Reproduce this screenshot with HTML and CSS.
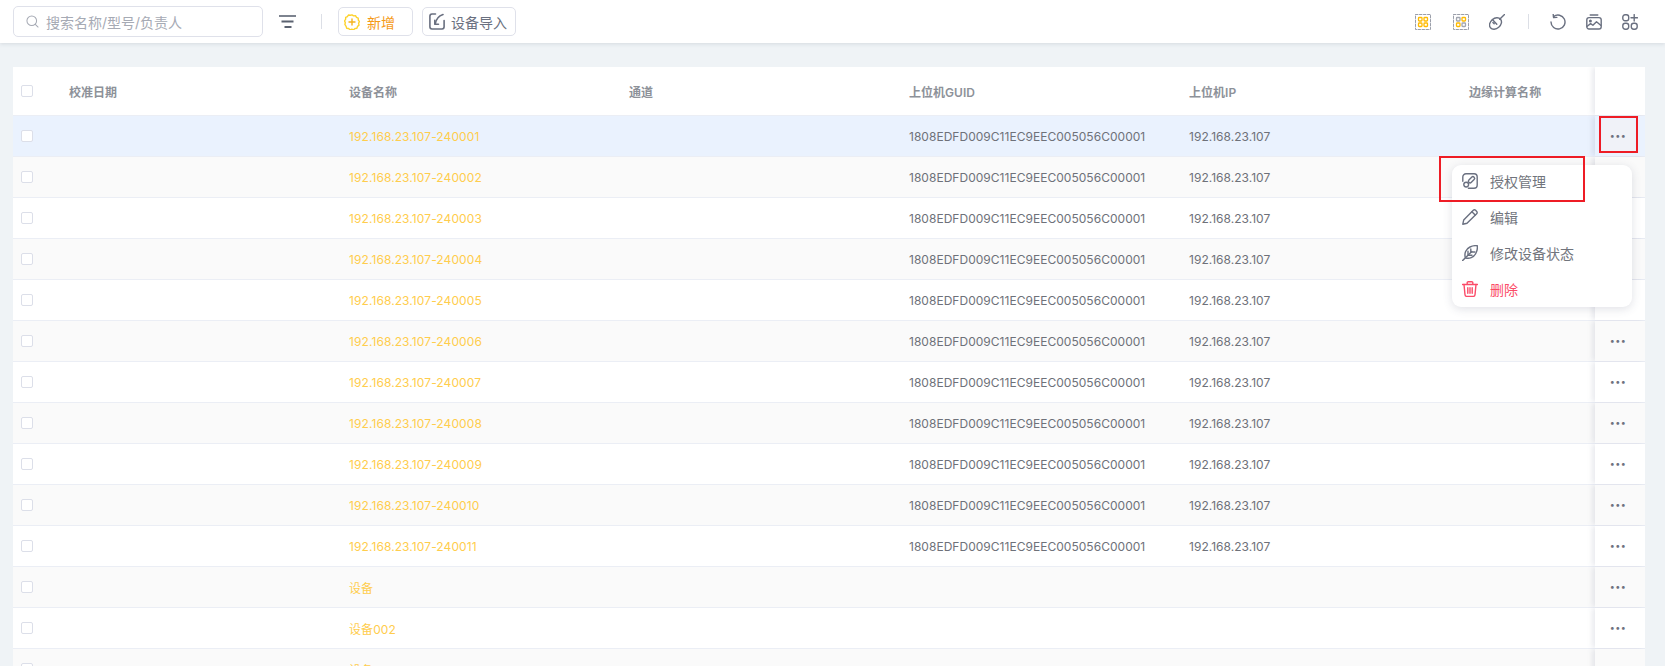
FILE: index.html
```html
<!DOCTYPE html>
<html lang="zh-CN">
<head>
<meta charset="utf-8">
<title>设备管理</title>
<link rel="stylesheet" href="styles.css">
</head>
<body>
<header class="toolbar">
  <label class="search">
    <svg class="ico-search" viewBox="0 0 14 14"><circle cx="6.2" cy="6.2" r="5.2"/><path d="M10 10l3 3"/></svg>
    <span class="search-text">搜索名称/型号/负责人</span>
  </label>
  <svg class="ico-filter" viewBox="0 0 17 13"><path class="thin" d="M0 1h17"/><path d="M2.500 6.500h12M5.500 12h7"/></svg>
  <span class="divider first"></span>
  <button class="btn btn-add">
    <svg class="ico16 gold" viewBox="0 0 16 16"><path d="M8 .9l1.600 1 1.900-.2 1 1.600 1.700.8.100 1.900 1.100 1.600-.8 1.700.4 1.900-1.500 1.200-.6 1.800-1.900.3-1.400 1.300-1.800-.6-1.800.6-1.400-1.300-1.900-.3-.6-1.800L.9 10.500l.4-1.900L.500 6.900l1.100-1.600.1-1.900 1.700-.8 1-1.600 1.900.2z"/><path class="orange" d="M8 5v6M5 8h6"/></svg>
    <span>新增</span>
  </button>
  <button class="btn btn-import">
    <svg class="ico-import slate" viewBox="0 0 16 17"><path d="M6.500 1H3A2.200 2.200 0 0 0 .9 3.200v10.600A2.200 2.200 0 0 0 3 16h10a2.200 2.200 0 0 0 2.100-2.200V7.500"/><path d="M14 1.500C9.500 3 7 6 6.200 11"/><path d="M5.800 7.400v3.900h3.700"/></svg>
    <span>设备导入</span>
  </button>
  <div class="tools">
    <svg class="ico16" viewBox="0 0 16 16"><rect class="dash" x=".5" y=".5" width="15" height="15"/><g class="gold-s"><rect x="3.500" y="3.500" width="3.500" height="3.500" rx=".8"/><rect x="9" y="3.500" width="3.500" height="3.500" rx=".8"/><rect x="3.500" y="9" width="3.500" height="3.500" rx=".8"/><rect x="9" y="9" width="3.500" height="3.500" rx=".8"/></g></svg>
    <svg class="ico16" viewBox="0 0 16 16"><rect class="dash" x=".5" y=".5" width="15" height="15"/><g class="gray-s"><rect x="3.500" y="3.500" width="3.500" height="3.500" rx=".8"/><rect x="9" y="9" width="3.500" height="3.500" rx=".8"/></g><g class="gold-s"><rect x="9" y="3.500" width="3.500" height="3.500" rx=".8"/><rect x="3.500" y="9" width="3.500" height="3.500" rx=".8"/></g></svg>
    <svg class="ico16 slate" viewBox="0 0 16 16"><ellipse cx="6.500" cy="9.500" rx="6.600" ry="5" transform="rotate(-40 6.500 9.500)"/><path d="M3.400 5.600l4.400 4.600M5.200 9.800L3.900 8.400"/><path d="M10.700 5.300L15.500.6"/></svg>
    <span class="divider"></span>
    <svg class="ico16 slate" viewBox="0 0 16 16"><path d="M3.600 2.600A7 7 0 1 1 1 8"/><path d="M3.200 .4l.4 3.200 3.200-.2"/></svg>
    <svg class="ico16 slate" viewBox="0 0 16 16"><path d="M4.200 1h7.600"/><rect x=".8" y="3.600" width="14.400" height="11.400" rx="2.200"/><circle cx="4.400" cy="7" r=".8"/><path d="M1.200 12.200l3.400-2.600 2.300 1.700 3.600-3.600 4.200 3.600"/></svg>
    <svg class="ico16 slate" viewBox="0 0 16 16"><rect x=".8" y=".8" width="5.900" height="5.900" rx="2.200"/><rect x=".8" y="9.300" width="5.900" height="5.900" rx="2.400"/><rect x="9.300" y="9.300" width="5.900" height="5.900" rx="2.400"/><path d="M12.200 .6v6.400M9 3.800h6.400"/></svg>
  </div>
</header>

<main class="table">
  <div class="row head">
    <div class="cell"><i class="check"></i></div>
    <div class="cell">校准日期</div>
    <div class="cell">设备名称</div>
    <div class="cell">通道</div>
    <div class="cell">上位机GUID</div>
    <div class="cell">上位机IP</div>
    <div class="cell">边缘计算名称</div>
    <div class="cell act"></div>
  </div>
  <div class="row hover">
    <div class="cell"><i class="check"></i></div><div class="cell"></div>
    <div class="cell link">192.168.23.107-240001</div><div class="cell"></div>
    <div class="cell">1808EDFD009C11EC9EEC005056C00001</div><div class="cell">192.168.23.107</div><div class="cell"></div>
    <div class="cell act"><span class="more on">•••</span></div>
  </div>
  <div class="row">
    <div class="cell"><i class="check"></i></div><div class="cell"></div>
    <div class="cell link">192.168.23.107-240002</div><div class="cell"></div>
    <div class="cell">1808EDFD009C11EC9EEC005056C00001</div><div class="cell">192.168.23.107</div><div class="cell"></div>
    <div class="cell act"><span class="more">•••</span></div>
  </div>
  <div class="row">
    <div class="cell"><i class="check"></i></div><div class="cell"></div>
    <div class="cell link">192.168.23.107-240003</div><div class="cell"></div>
    <div class="cell">1808EDFD009C11EC9EEC005056C00001</div><div class="cell">192.168.23.107</div><div class="cell"></div>
    <div class="cell act"><span class="more">•••</span></div>
  </div>
  <div class="row">
    <div class="cell"><i class="check"></i></div><div class="cell"></div>
    <div class="cell link">192.168.23.107-240004</div><div class="cell"></div>
    <div class="cell">1808EDFD009C11EC9EEC005056C00001</div><div class="cell">192.168.23.107</div><div class="cell"></div>
    <div class="cell act"><span class="more">•••</span></div>
  </div>
  <div class="row">
    <div class="cell"><i class="check"></i></div><div class="cell"></div>
    <div class="cell link">192.168.23.107-240005</div><div class="cell"></div>
    <div class="cell">1808EDFD009C11EC9EEC005056C00001</div><div class="cell">192.168.23.107</div><div class="cell"></div>
    <div class="cell act"><span class="more">•••</span></div>
  </div>
  <div class="row">
    <div class="cell"><i class="check"></i></div><div class="cell"></div>
    <div class="cell link">192.168.23.107-240006</div><div class="cell"></div>
    <div class="cell">1808EDFD009C11EC9EEC005056C00001</div><div class="cell">192.168.23.107</div><div class="cell"></div>
    <div class="cell act"><span class="more">•••</span></div>
  </div>
  <div class="row">
    <div class="cell"><i class="check"></i></div><div class="cell"></div>
    <div class="cell link">192.168.23.107-240007</div><div class="cell"></div>
    <div class="cell">1808EDFD009C11EC9EEC005056C00001</div><div class="cell">192.168.23.107</div><div class="cell"></div>
    <div class="cell act"><span class="more">•••</span></div>
  </div>
  <div class="row">
    <div class="cell"><i class="check"></i></div><div class="cell"></div>
    <div class="cell link">192.168.23.107-240008</div><div class="cell"></div>
    <div class="cell">1808EDFD009C11EC9EEC005056C00001</div><div class="cell">192.168.23.107</div><div class="cell"></div>
    <div class="cell act"><span class="more">•••</span></div>
  </div>
  <div class="row">
    <div class="cell"><i class="check"></i></div><div class="cell"></div>
    <div class="cell link">192.168.23.107-240009</div><div class="cell"></div>
    <div class="cell">1808EDFD009C11EC9EEC005056C00001</div><div class="cell">192.168.23.107</div><div class="cell"></div>
    <div class="cell act"><span class="more">•••</span></div>
  </div>
  <div class="row">
    <div class="cell"><i class="check"></i></div><div class="cell"></div>
    <div class="cell link">192.168.23.107-240010</div><div class="cell"></div>
    <div class="cell">1808EDFD009C11EC9EEC005056C00001</div><div class="cell">192.168.23.107</div><div class="cell"></div>
    <div class="cell act"><span class="more">•••</span></div>
  </div>
  <div class="row">
    <div class="cell"><i class="check"></i></div><div class="cell"></div>
    <div class="cell link">192.168.23.107-240011</div><div class="cell"></div>
    <div class="cell">1808EDFD009C11EC9EEC005056C00001</div><div class="cell">192.168.23.107</div><div class="cell"></div>
    <div class="cell act"><span class="more">•••</span></div>
  </div>
  <div class="row">
    <div class="cell"><i class="check"></i></div><div class="cell"></div>
    <div class="cell link">设备</div><div class="cell"></div>
    <div class="cell"></div><div class="cell"></div><div class="cell"></div>
    <div class="cell act"><span class="more">•••</span></div>
  </div>
  <div class="row">
    <div class="cell"><i class="check"></i></div><div class="cell"></div>
    <div class="cell link">设备002</div><div class="cell"></div>
    <div class="cell"></div><div class="cell"></div><div class="cell"></div>
    <div class="cell act"><span class="more">•••</span></div>
  </div>
  <div class="row">
    <div class="cell"><i class="check"></i></div><div class="cell"></div>
    <div class="cell link">设备001</div><div class="cell"></div>
    <div class="cell"></div><div class="cell"></div><div class="cell"></div>
    <div class="cell act"><span class="more">•••</span></div>
  </div>
</main>

<ul class="menu">
  <li>
    <svg class="ico16 slate" viewBox="0 0 16 16"><path d="M.8 8.200V4A3.200 3.200 0 0 1 4 .8h8A3.200 3.200 0 0 1 15.200 4v8a3.200 3.200 0 0 1-3.200 3.200H6.400"/><circle cx="4.200" cy="11.600" r="2.400"/><rect x="5.800" y="5" width="7.400" height="3.500" rx="1.750" transform="rotate(-45 9.500 6.750)"/></svg>
    <span>授权管理</span>
  </li>
  <li>
    <svg class="ico16 slate" viewBox="0 0 16 16"><path d="M.8 15.200l.9-4.100L11.300 1.300a1.600 1.600 0 0 1 2.300 0l1.100 1.100a1.600 1.600 0 0 1 0 2.300L5 14.300z"/><path d="M9.900 2.800l3.300 3.300"/></svg>
    <span>编辑</span>
  </li>
  <li>
    <svg class="ico16 slate" viewBox="0 0 16 16"><path d="M.6 15.600L9.800 6.400"/><path d="M3.400 12.800C2 8.500 3.800 4 8 2c2.400-1.200 5.200-1.500 7.300-1.200.3 2.500-.2 5.200-1.400 7.400C11.700 12.600 7.200 14.200 3.400 12.800z"/><path d="M6 6.200v4h4M8.800 4v3.300M12.800 7H9.400"/></svg>
    <span>修改设备状态</span>
  </li>
  <li class="danger">
    <svg class="ico16 red" viewBox="0 0 16 16"><path d="M.5 3.500h15M5.200 3.400V1.600C5.200 1 5.600.7 6.200.7h3.600c.6 0 1 .3 1 .9v1.800"/><path d="M2 3.500l1 10.300c.1 1 .8 1.600 1.800 1.600h6.400c1 0 1.700-.6 1.800-1.600L14 3.500"/><path d="M5.800 6.800v5.400M8 6.800v5.400M10.200 6.800v5.400"/></svg>
    <span>删除</span>
  </li>
</ul>

<span class="mark mark-dots"></span>
<span class="mark mark-item"></span>
</body>
</html>
```

FILE: styles.css
```css
* { box-sizing: border-box; }

html, body {
  height: 100%;
  margin: 0;
  overflow: hidden;
}

body {
  background: #eff3f6;
  color: #6e7179;
  font-family: Inter, "Noto Sans CJK SC", sans-serif;
  font-size: 12px;
}

svg { display: block; flex: none; fill: none; }

.ico16 { width: 16px; height: 16px; stroke-width: 1.4; stroke-linecap: round; stroke-linejoin: round; }
.ico-import { width: 16px; height: 17px; stroke-width: 1.6; stroke-linecap: round; stroke-linejoin: round; }
.slate { stroke: #6a7080; }
.red { stroke: #fb4b68; }
.gold { stroke: #fdd22c; stroke-width: 1.4; }
.orange { stroke: #f5b21c; }
.dash { stroke: #9a9ea9; stroke-width: 1; stroke-dasharray: 2.500 1.500; }
.gold-s { stroke: #ffbb00; stroke-width: 1.300; }
.gray-s { stroke: #a2a6b0; stroke-width: 1.300; }

.toolbar {
  position: relative;
  z-index: 2;
  display: flex;
  align-items: center;
  height: 43px;
  padding: 0 27px 0 13px;
  background: #fff;
  box-shadow: 0 1px 4px rgba(60, 70, 90, .14);
}

.search {
  display: flex;
  flex: none;
  align-items: center;
  gap: 7px;
  width: 250px;
  height: 31px;
  padding-left: 12px;
  border: 1px solid #dfe1ea;
  border-radius: 5px;
}
.ico-search { width: 13px; height: 13px; stroke: #a6aab4; stroke-width: 1.100; stroke-linecap: round; }
.search-text { color: #a6aab4; font-size: 14px; }

.ico-filter { width: 17px; height: 13px; margin-left: 16px; stroke: #5b6270; stroke-width: 2; }
.ico-filter .thin { stroke: #7d838f; }

.divider { width: 1px; height: 15px; background: #dcdfe6; }
.divider.first { margin: 0 16px 0 25px; }

.btn {
  display: flex;
  flex: none;
  align-items: center;
  height: 29px;
  border: 1px solid #dfe1ea;
  border-radius: 5px;
  background: #fff;
  font: inherit;
  font-size: 14px;
}
.btn-add { width: 75px; gap: 7px; padding: 0 5px; color: #f59a17; }
.btn-import { width: 94px; gap: 6px; margin-left: 9px; padding: 0 6px; color: #6a7080; }

.tools {
  display: flex;
  align-items: center;
  gap: 20px;
  margin-left: auto;
}
.tools > :nth-child(2) { margin-left: 2px; }
.tools .divider { margin: 0 1px 0 3px; }

.table {
  margin: 24px 20px 0 13px;
  background: #fff;
}

.row {
  display: grid;
  grid-template-columns: 48px repeat(5, 280px) 134px 50px;
  height: 41px;
  border-bottom: 1px solid #ebeef5;
}
.row:nth-child(odd) { background: #fafafa; }
.row.head {
  height: 49px;
  background: #fff;
  color: #8d9199;
  font-weight: 600;
}
.row.hover { background: #eaf2fe; }

.cell {
  display: flex;
  align-items: center;
  min-width: 0;
  padding-left: 8px;
  letter-spacing: .03px;
  white-space: nowrap;
}

.link { color: #ffcd4d; letter-spacing: .09px; }

.check {
  display: block;
  width: 12px;
  height: 12px;
  border: 1px solid #dcdfe9;
  border-radius: 2px;
  background: #fff;
}

.act {
  justify-content: center;
  padding: 0;
  box-shadow: -3px 0 5px rgba(90, 100, 130, .13);
  clip-path: inset(0 0 -1px -8px);
}

.more {
  display: flex;
  align-items: center;
  justify-content: center;
  width: 33px;
  height: 33px;
  margin-left: -4px;
  padding-bottom: 2px;
  border-radius: 3px;
  color: #6e7280;
  font-size: 9px;
  letter-spacing: .5px;
}
.more.on { background: #f0f2f8; }

.menu {
  position: absolute;
  top: 165px;
  left: 1452px;
  z-index: 3;
  width: 180px;
  height: 142px;
  margin: 0;
  padding: 0;
  border-radius: 9px;
  background: #fff;
  box-shadow: 0 2px 10px rgba(60, 70, 100, .16);
  list-style: none;
}
.menu li {
  display: flex;
  align-items: center;
  gap: 12px;
  height: 36px;
  padding-left: 10px;
  color: #71747c;
  font-size: 14px;
}
.menu li:first-child { height: 34px; padding-bottom: 2px; }
.menu .danger { color: #fb4b68; }

.mark {
  position: absolute;
  z-index: 4;
  border: 2px solid #ee1c25;
}
.mark-dots { top: 116px; left: 1599px; width: 39px; height: 37px; }
.mark-item { top: 156px; left: 1439px; width: 146px; height: 46px; }
```
